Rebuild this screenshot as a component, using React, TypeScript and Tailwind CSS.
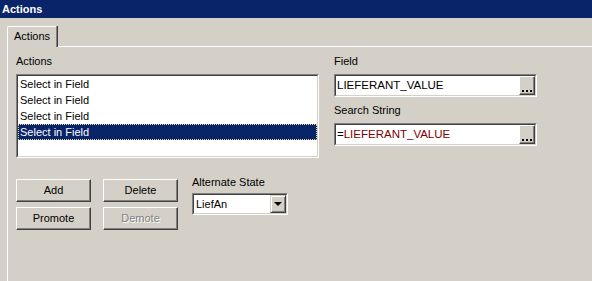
const items = ["Select in Field", "Select in Field", "Select in Field", "Select in Field"];

function EllipsisButton() {
  return (
    <div className="w-[16px] h-full bg-[#d4d0c8] border border-t-white border-l-white border-r-[#404040] border-b-[#404040] shadow-[inset_-1px_-1px_0_#808080] flex items-end justify-center gap-[2px] pb-[2px]">
      <div className="w-[2px] h-[2px] bg-black" />
      <div className="w-[2px] h-[2px] bg-black" />
      <div className="w-[2px] h-[2px] bg-black" />
    </div>
  );
}

function Sunken({ className = "", children }: { className?: string; children: React.ReactNode }) {
  return (
    <div className={`bg-white border border-t-[#808080] border-l-[#808080] border-r-white border-b-white ${className}`}>
      <div className="h-full border border-t-[#404040] border-l-[#404040] border-r-[#d4d0c8] border-b-[#d4d0c8]">
        {children}
      </div>
    </div>
  );
}

function Button({ label, disabled = false }: { label: string; disabled?: boolean }) {
  return (
    <div className="w-[75px] h-[23px] bg-[#d4d0c8] border border-t-white border-l-white border-r-[#404040] border-b-[#404040] shadow-[inset_-1px_-1px_0_#808080] flex items-center justify-center">
      <span className={disabled ? "text-[#808080] [text-shadow:1px_1px_0_#fff]" : "text-black"}>{label}</span>
    </div>
  );
}

export default function App() {
  return (
    <div className="w-[592px] h-[281px] bg-[#d4d0c8] flex flex-col overflow-hidden text-[11px] leading-[13px] text-black font-['Liberation_Sans',Arial,sans-serif]">
      {/* Title bar */}
      <div className="h-[18px] shrink-0 bg-[#0a246a] text-white font-bold pl-[2px] flex items-center">
        Actions
      </div>

      {/* Tab control */}
      <div className="flex-1 flex flex-col pl-[7px] pt-[8px]">
        <div className="flex">
          <div className="relative z-10 -mb-px w-[50px] h-[21px] bg-[#d4d0c8] border-t border-l border-t-white border-l-white rounded-tl-[2px] border-r border-r-[#808080] shadow-[1px_0_0_#404040] pl-[6px] pt-[3px]">
            Actions
          </div>
        </div>

        <div className="flex-1 border-t border-l border-t-white border-l-white pl-[8px] pt-[8px]">
          <div className="flex gap-[15px]">
            {/* Left column */}
            <div className="w-[303px] flex flex-col gap-[7px]">
              <div className="h-[12px]">Actions</div>
              <Sunken className="h-[84px]">
                <div className="flex flex-col">
                  {items.map((t, i) => (
                    <div
                      key={i}
                      className={
                        i === 3
                          ? "h-[16px] pl-[2px] flex items-center bg-[#0a246a] text-white outline-1 outline-dotted outline-[#e6dca0] -outline-offset-1"
                          : "h-[16px] pl-[2px] flex items-center"
                      }
                    >
                      {t}
                    </div>
                  ))}
                </div>
              </Sunken>
            </div>

            {/* Right column */}
            <div className="w-[203px] flex flex-col gap-[7px]">
              <div className="h-[12px]">Field</div>
              <Sunken className="h-[23px]">
                <div className="h-full flex items-center">
                  <span className="flex-1 pl-[1px] text-[11.5px]">LIEFERANT_VALUE</span>
                  <EllipsisButton />
                </div>
              </Sunken>
              <div className="h-[12px]">Search String</div>
              <Sunken className="h-[23px]">
                <div className="h-full flex items-center">
                  <span className="flex-1 pl-[1px] text-[11.5px]">
                    =<span className="text-[#800000]">LIEFERANT_VALUE</span>
                  </span>
                  <EllipsisButton />
                </div>
              </Sunken>
            </div>
          </div>

          {/* Buttons + alternate state */}
          <div className="flex mt-[18px]">
            <div className="pt-[3px] grid grid-cols-2 gap-x-[12px] gap-y-[5px]">
              <Button label="Add" />
              <Button label="Delete" />
              <Button label="Promote" />
              <Button label="Demote" disabled />
            </div>
            <div className="ml-[14px] flex flex-col gap-[5px]">
              <div className="h-[12px]">Alternate State</div>
              <Sunken className="w-[96px] h-[22px]">
                <div className="h-full flex items-center">
                  <span className="flex-1 pl-[2px]">LiefAn</span>
                  <div className="w-[16px] h-full bg-[#d4d0c8] border border-t-[#d4d0c8] border-l-[#d4d0c8] border-r-[#404040] border-b-[#404040] shadow-[inset_1px_1px_0_#fff,inset_-1px_-1px_0_#808080] flex items-center justify-center">
                    <div className="w-0 h-0 border-l-[4px] border-r-[4px] border-t-[4px] border-l-transparent border-r-transparent border-t-black" />
                  </div>
                </div>
              </Sunken>
            </div>
          </div>
        </div>
      </div>
    </div>
  );
}
